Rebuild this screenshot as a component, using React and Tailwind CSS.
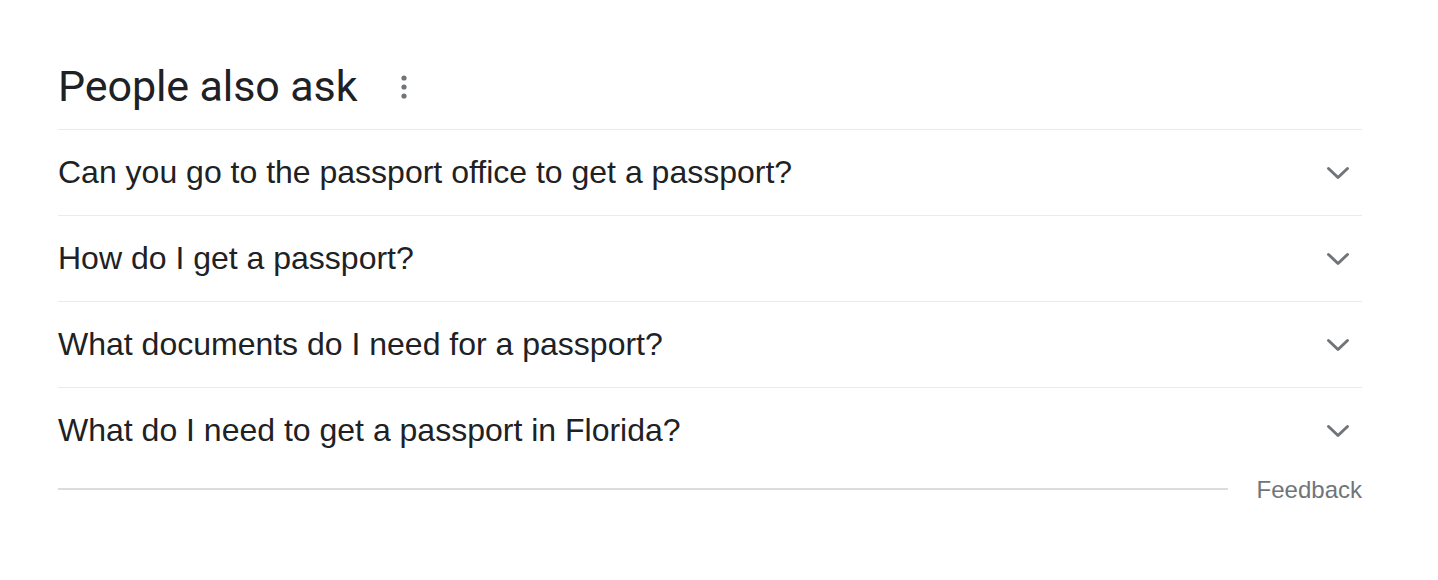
import React from "react";

const questions = [
  "Can you go to the passport office to get a passport?",
  "How do I get a passport?",
  "What documents do I need for a passport?",
  "What do I need to get a passport in Florida?",
];

function Chevron() {
  return (
    <svg width="24" height="24" viewBox="0 0 24 24" className="text-[#70757a]">
      <path d="M2.5 7.5 L12 16.5 L21.5 7.5" fill="none" stroke="currentColor" strokeWidth="3" strokeLinecap="round" strokeLinejoin="round" />
    </svg>
  );
}

function Dots() {
  return (
    <svg width="10" height="26" viewBox="0 0 10 26" className="text-[#70757a]">
      <circle cx="5" cy="4" r="2.6" fill="currentColor" />
      <circle cx="5" cy="13" r="2.6" fill="currentColor" />
      <circle cx="5" cy="22" r="2.6" fill="currentColor" />
    </svg>
  );
}

export default function App() {
  return (
    <div className="w-[1438px] h-[580px] bg-white px-[58px] pt-[56px] font-['Liberation_Sans',Arial,sans-serif]">
      <div className="w-[1304px]">
        <div className="flex items-center h-[74px] border-b border-[#ebebeb]">
          <h2 className="font-['Roboto',sans-serif] text-[43px] leading-none text-[#202124] tracking-[-0.1px] -mt-[12px]">People also ask</h2>
          <div className="ml-[42px] -mt-[12px]"><Dots /></div>
        </div>
        {questions.map((q, i) => (
          <div key={q} className={`flex items-center justify-between h-[86px] ${i < questions.length - 1 ? "border-b border-[#ebebeb]" : ""}`}>
            <span className="text-[32px] text-[#202124] -mt-[2px]">{q}</span>
            <div className="mr-[12px]"><Chevron /></div>
          </div>
        ))}
        <div className="flex items-center h-[30px]">
          <div className="flex-1 h-[2px] bg-[#dadce0]"></div>
          <span className="ml-[29px] text-[24px] leading-[30px] text-[#70757a] mt-[2px]">Feedback</span>
        </div>
      </div>
    </div>
  );
}
